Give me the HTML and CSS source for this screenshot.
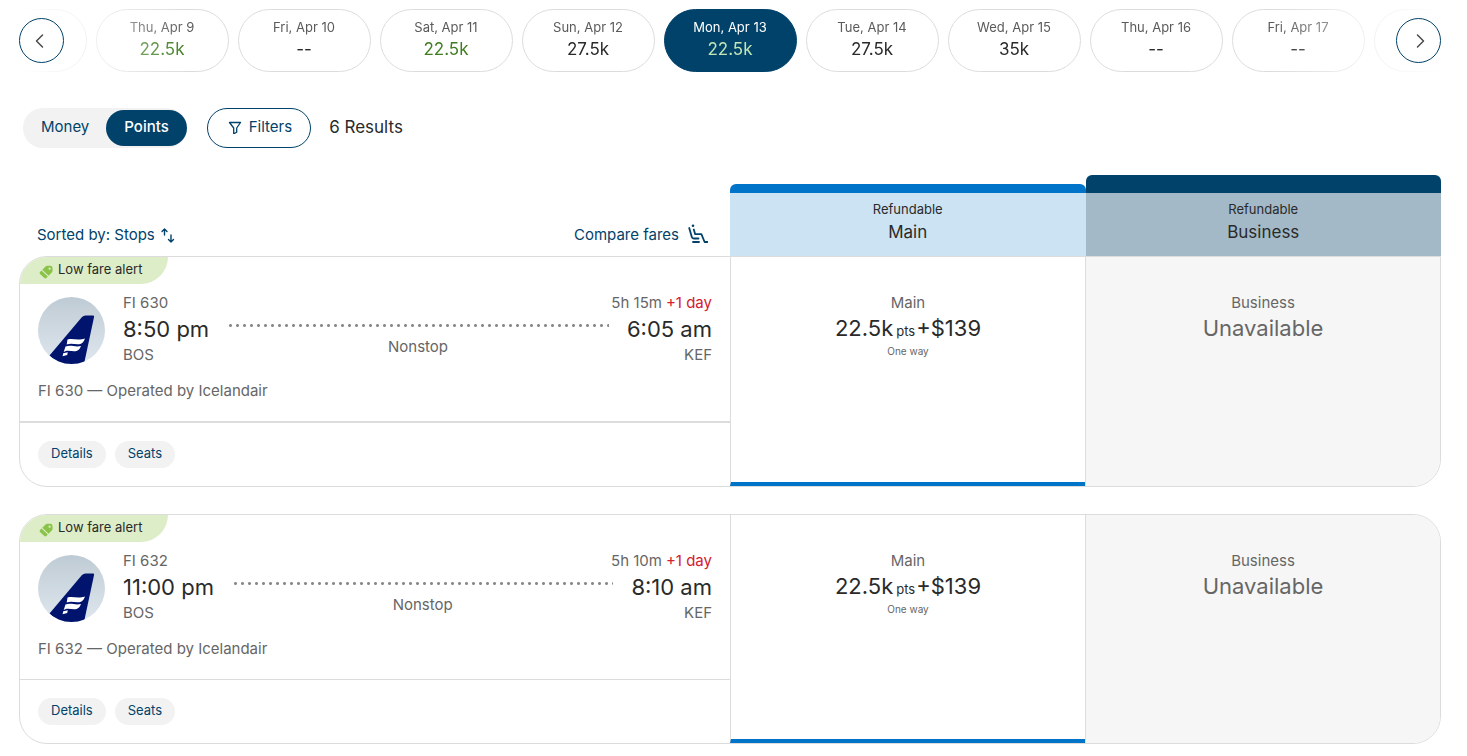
FILE: index.html
```html
<!DOCTYPE html>
<html lang="en">
<head>
    <meta charset="UTF-8">
    <meta name="viewport" content="width=device-width, initial-scale=1.0">
    <title>Flight results</title>
    <link rel="stylesheet" href="styles.css">
</head>
<body>

    <!-- shared icons -->
    <svg class="sprite" width="0" height="0" aria-hidden="true">
        <defs>
            <linearGradient id="sky" x1="0" y1="0" x2="0" y2="1">
                <stop offset="0" stop-color="#bfcbd4"/>
                <stop offset="1" stop-color="#dfe7ee"/>
            </linearGradient>
            <clipPath id="circle"><circle cx="33.5" cy="33.5" r="33.5"/></clipPath>
        </defs>
        <symbol id="tail" viewBox="0 0 67 67">
            <g clip-path="url(#circle)">
                <rect width="67" height="67" fill="url(#sky)"/>
                <path d="M44 20q1.500-1.500 3.500-1.500h7.500q1.300 0 1.100 1.200L46 67H20L11.500 58.500z" fill="#00146e"/>
                <path d="M29.500 42.500c5.500-1.500 10 1.500 17.500-1-.8 2-1.800 4.200-4 5.200-5 1.600-9-1.200-14.300.8z" fill="#fff"/>
                <path d="M27.500 49.500c5.500-2 9.500 1 15.500-.5-1 2.600-2.200 4.500-4.500 5-4 1-7.500-1.300-11.300.2l-1.500.7z" fill="#fff"/>
                <path d="M25.200 56.200l4.600-1-.6 2.800-4.600 1.200z" fill="#fff"/>
            </g>
        </symbol>
        <symbol id="tag" viewBox="0 0 14 14">
            <path d="M6.500 1.500Q7.200.8 8.400.8h3q2 0 2.100 2.100l.1 2.700q0 1.200-.8 2L9.600 10.800 3.300 4.700z" fill="#8bc34a"/>
            <path d="M2.500 5.500l6.300 6.100-1.400 1.400q-1 .9-2 0L1 8.900q-.9-1 0-1.900z" fill="#8bc34a"/>
            <circle cx="10.600" cy="3.700" r="1.100" fill="#dcedc8"/>
        </symbol>
    </svg>

    <nav class="dates" aria-label="Departure date">
        <div class="dates-track">
            <button type="button" class="date" aria-label="Wed, Apr 8"></button>
            <button type="button" class="date low"><span>Thu, Apr 9</span><b>22.5k</b></button>
            <button type="button" class="date"><span>Fri, Apr 10</span><b>--</b></button>
            <button type="button" class="date low"><span>Sat, Apr 11</span><b>22.5k</b></button>
            <button type="button" class="date"><span>Sun, Apr 12</span><b>27.5k</b></button>
            <button type="button" class="date low selected"><span>Mon, Apr 13</span><b>22.5k</b></button>
            <button type="button" class="date"><span>Tue, Apr 14</span><b>27.5k</b></button>
            <button type="button" class="date"><span>Wed, Apr 15</span><b>35k</b></button>
            <button type="button" class="date"><span>Thu, Apr 16</span><b>--</b></button>
            <button type="button" class="date"><span>Fri, Apr 17</span><b>--</b></button>
            <button type="button" class="date" aria-label="Sat, Apr 18"></button>
        </div>
        <button type="button" class="arrow arrow-prev" aria-label="Previous dates">
            <svg width="16" height="16" viewBox="0 0 16 16"><path d="M8.500 2L2.500 8l6 6"/></svg>
        </button>
        <button type="button" class="arrow arrow-next" aria-label="Next dates">
            <svg width="16" height="16" viewBox="0 0 16 16"><path d="M6.500 2l6 6-6 6"/></svg>
        </button>
    </nav>

    <div class="toolbar">
        <div class="toggle" role="group" aria-label="Show prices in">
            <button type="button" aria-pressed="false">Money</button>
            <button type="button" class="active" aria-pressed="true">Points</button>
        </div>
        <button type="button" class="filters">
            <svg width="14" height="14" viewBox="0 0 14 14"><path d="M1.500 2.500h11L8.700 8v4.200l-3 1.600V8z"/></svg>
            Filters
        </button>
        <span class="count">6 Results</span>
    </div>

    <main>
        <div class="columns">
            <div class="columns-tools">
                <button type="button" class="link-btn">
                    Sorted by: Stops
                    <svg width="14" height="18" viewBox="0 0 14 18"><path d="M3.500 10V4M1 6.500L3.500 4 6 6.500M10 10v7M7.500 14.500L10 17l2.500-2.500"/></svg>
                </button>
                <button type="button" class="link-btn compare">
                    Compare fares
                    <svg width="20" height="20" viewBox="0 0 20 20"><circle cx="5" cy="1.800" r="1.300"/><path d="M1.200 4l2.600 9q.4 1.500 2 1.500h4.700M5.800 5.500l1.400 4.700h6.200l3.200 7.800h3M5 18h6"/></svg>
                </button>
            </div>
            <div class="column column-main">
                <span>Refundable</span>
                <strong>Main</strong>
            </div>
            <div class="column column-business">
                <span>Refundable</span>
                <strong>Business</strong>
            </div>
        </div>

        <article class="flight">
            <div class="flight-info">
                <div class="badge">
                    <svg width="14" height="14"><use href="#tag"/></svg>
                    Low fare alert
                </div>
                <div class="route">
                    <svg class="airline" width="67" height="67" role="img" aria-label="Icelandair"><use href="#tail"/></svg>
                    <div class="stop">
                        <span>FI 630</span>
                        <strong>8:50 pm</strong>
                        <span>BOS</span>
                    </div>
                    <div class="path">
                        <div class="dots"></div>
                        <span>Nonstop</span>
                    </div>
                    <div class="stop stop-end">
                        <span class="duration">5h 15m <em>+1 day</em></span>
                        <strong>6:05 am</strong>
                        <span>KEF</span>
                    </div>
                </div>
                <p class="operator">FI 630 — Operated by Icelandair</p>
                <div class="flight-footer">
                    <button type="button">Details</button>
                    <button type="button">Seats</button>
                </div>
            </div>
            <div class="fare fare-main">
                <span>Main</span>
                <strong>22.5k<small>pts</small>+$139</strong>
                <small>One way</small>
            </div>
            <div class="fare fare-none">
                <span>Business</span>
                <strong>Unavailable</strong>
            </div>
        </article>

        <article class="flight">
            <div class="flight-info">
                <div class="badge">
                    <svg width="14" height="14"><use href="#tag"/></svg>
                    Low fare alert
                </div>
                <div class="route">
                    <svg class="airline" width="67" height="67" role="img" aria-label="Icelandair"><use href="#tail"/></svg>
                    <div class="stop">
                        <span>FI 632</span>
                        <strong>11:00 pm</strong>
                        <span>BOS</span>
                    </div>
                    <div class="path">
                        <div class="dots"></div>
                        <span>Nonstop</span>
                    </div>
                    <div class="stop stop-end">
                        <span class="duration">5h 10m <em>+1 day</em></span>
                        <strong>8:10 am</strong>
                        <span>KEF</span>
                    </div>
                </div>
                <p class="operator">FI 632 — Operated by Icelandair</p>
                <div class="flight-footer">
                    <button type="button">Details</button>
                    <button type="button">Seats</button>
                </div>
            </div>
            <div class="fare fare-main">
                <span>Main</span>
                <strong>22.5k<small>pts</small>+$139</strong>
                <small>One way</small>
            </div>
            <div class="fare fare-none">
                <span>Business</span>
                <strong>Unavailable</strong>
            </div>
        </article>
    </main>

</body>
</html>
```

FILE: styles.css
```css
* {
    box-sizing: border-box;
}

body {
    margin: 0;
    padding: 9px 26px 12px 19px;
    font-family: Inter, "Liberation Sans", sans-serif;
    font-size: 15px;
    color: #2a2a2a;
    background-color: #ffffff;
}

button {
    font-family: inherit;
    color: #01426a;
    background: none;
    border: none;
    padding: 0;
    cursor: pointer;
}

svg path {
    stroke-linecap: round;
    stroke-linejoin: round;
}

strong, b {
    font-weight: 400;
}

.sprite {
    display: block;
}

/* date carousel */
.dates {
    position: relative;
}

.dates-track {
    display: flex;
    justify-content: center;
    gap: 9px;
    overflow: hidden;
    -webkit-mask-image: linear-gradient(to right, transparent, #000 170px, #000 calc(100% - 170px), transparent);
    mask-image: linear-gradient(to right, transparent, #000 170px, #000 calc(100% - 170px), transparent);
}

.date {
    flex: 0 0 133px;
    height: 63px;
    padding-bottom: 6px;
    display: flex;
    flex-direction: column;
    align-items: center;
    justify-content: center;
    border: 1px solid #dcdcdc;
    border-radius: 32px;
    font-size: 13px;
    line-height: 22px;
    color: #5a5a5a;
}

.date b {
    font-size: 17px;
    color: #2a2a2a;
}

.date.low b {
    color: #3f7d20;
}

.date.selected {
    background-color: #01426a;
    border-color: #01426a;
    color: #ffffff;
}

.date.selected b {
    color: #c1e6b4;
}

.arrow {
    position: absolute;
    top: 9px;
    width: 45px;
    height: 45px;
    display: flex;
    align-items: center;
    justify-content: center;
    background-color: #ffffff;
    border: 1px solid #01426a;
    border-radius: 50%;
}

.arrow-prev {
    left: 0;
}

.arrow-next {
    right: 0;
}

.arrow path {
    fill: none;
    stroke: #4a4a4a;
    stroke-width: 1.5;
}

/* toolbar */
.toolbar {
    display: flex;
    align-items: center;
    margin: 36px 0 27px 4px;
}

.toggle {
    display: flex;
    height: 40px;
    padding: 2px 0;
    background-color: #f2f2f2;
    border-radius: 20px;
}

.toggle button {
    padding: 0 17px 3px 18px;
    font-size: 15px;
    border-radius: 18px;
}

.toggle .active {
    padding: 0 18px 3px;
    color: #ffffff;
    font-weight: 500;
    background-color: #01426a;
}

.filters {
    display: flex;
    align-items: center;
    gap: 7px;
    height: 40px;
    margin: 0 18px 0 20px;
    padding: 0 18px 3px 20px;
    font-size: 15px;
    border: 1px solid #01426a;
    border-radius: 20px;
}

.filters path {
    fill: none;
    stroke: #01426a;
    stroke-width: 1.3;
}

.count {
    font-size: 17px;
    padding-bottom: 2px;
}

/* fare column headers */
.columns {
    display: grid;
    grid-template-columns: 2fr 1fr 1fr;
    align-items: end;
}

.columns-tools {
    display: flex;
    justify-content: space-between;
    padding: 0 22px 12px 18px;
}

.link-btn {
    display: flex;
    align-items: center;
    gap: 6px;
    font-size: 15px;
}

.link-btn svg {
    fill: #01426a;
}

.link-btn path {
    fill: none;
    stroke: #01426a;
    stroke-width: 1.4;
}

.compare {
    gap: 9px;
}

.compare path {
    stroke-width: 1.8;
}

.column {
    display: flex;
    flex-direction: column;
    align-items: center;
    height: 72px;
    padding-top: 5px;
    border-top: 9px solid #0074c8;
    border-radius: 6px 6px 0 0;
    background-color: #cce3f4;
    font-size: 13px;
    line-height: 22px;
}

.column strong {
    font-size: 17px;
    line-height: 24px;
}

.column-business {
    height: 81px;
    border-top: 18px solid #01426a;
    background-color: #a3b9c7;
}

/* flight cards */
.flight {
    display: grid;
    grid-template-columns: 2fr 1fr 1fr;
    margin-bottom: 27px;
    border: 1px solid #dcdcdc;
    border-radius: 28px;
    overflow: hidden;
}

.flight:first-of-type {
    border-top-right-radius: 0;
}

.flight:last-child {
    margin-bottom: 0;
}

.badge {
    display: flex;
    align-items: center;
    gap: 5px;
    width: fit-content;
    height: 27px;
    padding: 0 26px 3px 19px;
    font-size: 13px;
    background-color: #dcedc8;
    border-bottom-right-radius: 27px;
}

.badge svg {
    margin-top: 5px;
}

.route {
    display: flex;
    margin-top: 6px;
    padding: 0 18px;
    color: #666666;
}

.airline {
    margin: 7px 18px 0 0;
}

.stop {
    display: flex;
    flex-direction: column;
    line-height: 26px;
    white-space: nowrap;
}

.stop strong {
    font-size: 22px;
    color: #2a2a2a;
}

.stop em {
    font-style: normal;
    color: #d3202f;
}

.stop-end {
    align-items: flex-end;
}

/* the dotted line ends at the time, the duration hangs over it */
.duration {
    display: flex;
    justify-content: flex-end;
    gap: 4px;
    width: 0;
}

.path {
    flex: 1;
    margin: 34px 18px 0;
    text-align: center;
}

.dots {
    height: 3px;
    margin-bottom: 10px;
    background: radial-gradient(circle, #8a8a8a 0 1px, transparent 2px) 0 0 / 7px 3px repeat-x;
}

.operator {
    margin: 9px 0 0;
    padding: 0 18px 16px;
    line-height: 28px;
    color: #666666;
}

.flight-footer {
    display: flex;
    gap: 9px;
    padding: 18px;
    border-top: 1px solid #dcdcdc;
}

.flight:first-of-type .flight-footer {
    border-top-width: 2px;
}

.flight-footer button {
    height: 27px;
    padding: 0 13px 4px;
    font-size: 13px;
    background-color: #f2f2f2;
    border-radius: 14px;
}

.fare {
    display: flex;
    flex-direction: column;
    align-items: center;
    padding-top: 33px;
    line-height: 26px;
    border-left: 1px solid #dcdcdc;
    color: #666666;
}

.fare strong {
    font-size: 22px;
    line-height: 24px;
}

.fare small {
    font-size: 10px;
    line-height: 20px;
}

.fare strong small {
    margin: 0 1px 0 3px;
    font-size: 13px;
}

.fare-main {
    border-bottom: 4px solid #0074c8;
}

.fare-main strong {
    color: #2a2a2a;
}

.fare-none {
    background-color: #f6f6f6;
}
```
